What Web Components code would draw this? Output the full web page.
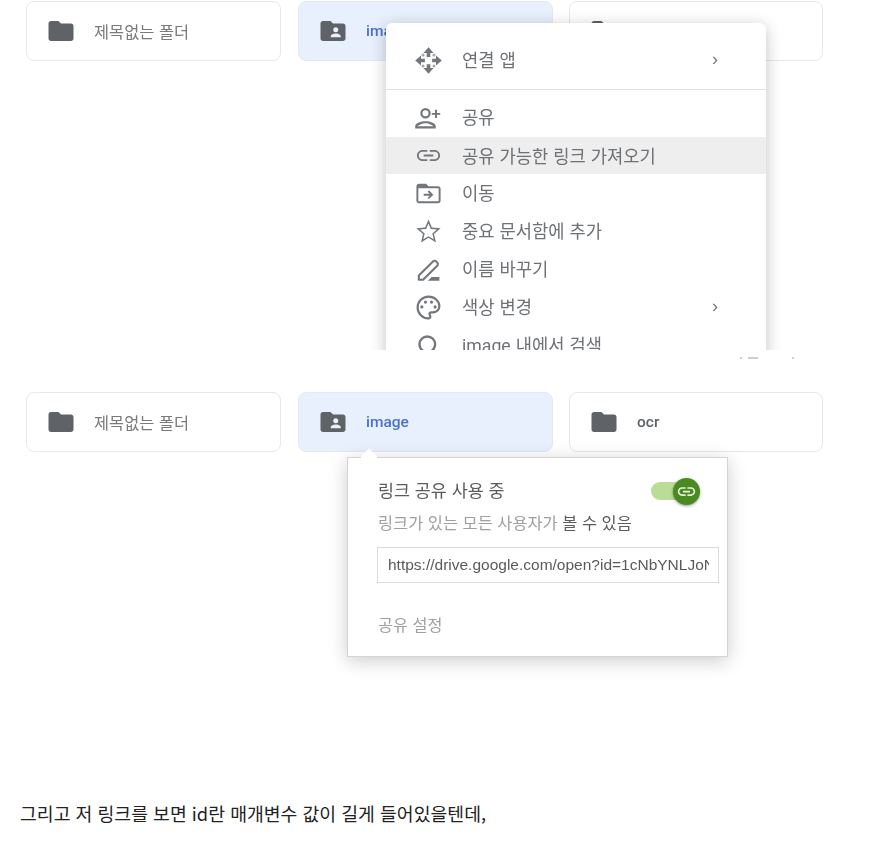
<!DOCTYPE html>
<html lang="ko">
<head>
<meta charset="utf-8">
<title>드라이브 링크 공유</title>
<style>
  html, body { margin: 0; background: #fff; }
  body { font-family: "Noto Sans CJK KR", "Noto Sans", sans-serif; }
</style>
</head>
<body>

<shot-frame style="height:350px">
  <folder-card name="제목없는 폴더"></folder-card>
  <folder-card name="image" kind="shared" selected></folder-card>
  <folder-card name=""></folder-card>
  <context-menu slot="over"></context-menu>
</shot-frame>

<scrap-marks></scrap-marks>

<shot-frame style="height:320px;margin-top:31px">
  <folder-card name="제목없는 폴더"></folder-card>
  <folder-card name="image" kind="shared" selected></folder-card>
  <folder-card name="ocr"></folder-card>
  <share-popover slot="over"></share-popover>
</shot-frame>

<blog-line>그리고 저 링크를 보면 id란 매개변수 값이 길게 들어있을텐데,</blog-line>

<script>
const ICONS = {
  folder: '<path d="M10 4H4c-1.1 0-2 .9-2 2v12c0 1.1.9 2 2 2h16c1.1 0 2-.9 2-2V8c0-1.1-.9-2-2-2h-8l-2-2z"/>',
  shared: '<path fill-rule="evenodd" d="M10 4H4c-1.1 0-2 .9-2 2v12c0 1.1.9 2 2 2h16c1.1 0 2-.9 2-2V8c0-1.1-.9-2-2-2h-8l-2-2zM14.2 9a2 2 0 1 1 0 4 2 2 0 0 1 0-4zm4 8h-8v-1c0-1.33 2.67-2 4-2s4 .67 4 2v1z"/>',
  apps: '<path d="M12 1l4.200 4.800h-2.700V9h-3V5.800H7.800zM12 23l-4.200-4.800h2.700V15h3v3.200h2.700zM1 12l4.800-4.200v2.700H9v3H5.800v2.700zM23 12l-4.800 4.200v-2.700H15v-3h3.200V7.800z"/><path opacity=".65" d="M7.500 6l1.500 1.500L7.500 9 6 7.500zM16.500 6L18 7.500 16.500 9 15 7.500zM7.500 15L9 16.500 7.500 18 6 16.500zM16.500 15l1.500 1.500-1.500 1.500-1.500-1.500z"/>',
  person: '<path d="M9.500 6a2.500 2.500 0 1 1 0 5 2.500 2.500 0 0 1 0-5m0-1.800a4.300 4.300 0 1 0 0 8.600 4.300 4.300 0 0 0 0-8.600zM9.500 15C6 15 1 16.500 1 19v2h17v-2c0-2.500-5-4-8.500-4zm-6.500 4.300c.5-.8 3.500-2.500 6.500-2.500s6 1.700 6.500 2.500z"/><path d="M19 8.200V5.500h-1.600v2.700h-2.700v1.600h2.700v2.700H19V9.800h2.700V8.200z"/>',
  link: '<path d="M3.900 12c0-1.710 1.390-3.100 3.100-3.100h4V7.400H7C4.500 7.400 2.400 9.500 2.400 12s2.100 4.600 4.600 4.600h4v-1.500H7c-1.710 0-3.100-1.390-3.100-3.100zM8 12.800h8v-1.600H8v1.600zm9-5.400h-4v1.500h4c1.710 0 3.100 1.390 3.100 3.100s-1.390 3.100-3.100 3.100h-4v1.500h4c2.500 0 4.600-2.100 4.600-4.600S19.500 7.400 17 7.400z"/>',
  move: '<path d="M20 6h-8l-2-2H4c-1.100 0-1.990.9-1.990 2L2 18c0 1.100.9 2 2 2h16c1.100 0 2-.9 2-2V8c0-1.100-.9-2-2-2zm.4 12.400H3.600V7.600h16.800v10.800z"/><path d="M12.400 9.400l-1.100 1.100 1.700 1.700H8v1.600h5l-1.700 1.700 1.100 1.100 3.600-3.600z"/>',
  star: '<path d="M22 9.240l-7.190-.62L12 2 9.190 8.630 2 9.240l5.460 4.730L5.820 21 12 17.270 18.180 21l-1.630-7.030L22 9.240zM12 15.900l-4.300 2.600 1.150-4.900-3.800-3.300 5-.43L12 5.300l1.950 4.570 5 .43-3.800 3.300 1.150 4.900z"/>',
  rename: '<path fill="none" stroke="currentColor" stroke-width="1.700" stroke-linejoin="round" d="M4 20.500v-3.500L15.700 5.300a1.800 1.800 0 0 1 2.600 0l.9.9a1.800 1.800 0 0 1 0 2.600L7.500 20.500z"/><path d="M11.500 21.300l3-3H21v3z"/>',
  palette: '<path fill="none" stroke="currentColor" stroke-width="1.800" d="M12 3a9 9 0 0 0 0 18c.9 0 1.500-.7 1.500-1.500 0-.9-.7-1.200-.7-2 0-.9.7-1.500 1.500-1.500H16c2.800 0 5-2.200 5-5 0-4.400-4-8-9-8z"/><circle cx="6.500" cy="11.500" r="1.300"/><circle cx="9.500" cy="7.500" r="1.300"/><circle cx="14.500" cy="7.500" r="1.300"/><circle cx="17.500" cy="11.500" r="1.300"/>',
  search: '<circle cx="11" cy="11" r="6.500" fill="none" stroke="currentColor" stroke-width="2"/><path d="M15.500 15.500l5 5" stroke="currentColor" stroke-width="2"/>',
  chain: '<path d="M3.900 12c0-1.710 1.390-3.100 3.100-3.100h4V7H7c-2.760 0-5 2.240-5 5s2.240 5 5 5h4v-1.900H7c-1.710 0-3.100-1.390-3.100-3.100zM8 13h8v-2H8v2zm9-6h-4v1.900h4c1.710 0 3.100 1.390 3.100 3.100s-1.390 3.100-3.100 3.100h-4V17h4c2.760 0 5-2.240 5-5s-2.240-5-5-5z"/>'
}

const icon = (name, size) => `<svg width="${size}" height="${size}" viewBox="0 0 24 24" fill="currentColor" aria-hidden="true">${ICONS[name]}</svg>`

/**
 * One captured part of the screenshot, cards in a row with an overlay on top.
 */
customElements.define('shot-frame', class extends HTMLElement {
  constructor () {
    super()
    this.attachShadow({ mode: 'open' }).innerHTML = `
      <style>
        :host { display: block; position: relative; overflow: hidden; filter: blur(.5px); }
        .row { display: flex; gap: 17px; padding: 1px 0 0 26px; }
      </style>
      <div class="row"><slot></slot></div>
      <slot name="over"></slot>`
  }
})

/**
 * A folder card of the Drive grid.
 */
customElements.define('folder-card', class extends HTMLElement {
  constructor () {
    super()
    const kind = this.getAttribute('kind') === 'shared' ? 'shared' : 'folder'
    const name = this.getAttribute('name')
    this.attachShadow({ mode: 'open' }).innerHTML = `
      <style>
        :host {
          display: flex; align-items: center; box-sizing: border-box;
          width: 255px; height: 60px; padding-left: 19px;
          border: 1px solid #e6e8ea; border-radius: 8px; background: #fff; color: #5f6368;
        }
        :host([selected]) { background: #e8f0fe; border-color: #e2e9f5; }
        :host(:last-of-type) { margin-left: -1px; width: 254px; }
        svg { color: #5f6368; flex: none; }
        span { margin-left: 18px; font-size: 16.400px; line-height: 20px; color: #7a7a7a; padding-bottom: 1px; }
        .latin { font: 500 15.500px/20px Roboto, sans-serif; color: #5f6368; padding-bottom: 0; }
        :host([selected]) .latin { color: #4a72cc; }
      </style>
      ${icon(kind, 30)}<span class="${/^[a-z]/.test(name) ? 'latin' : ''}">${name}</span>`
  }
})

/**
 * One row of the context menu.
 */
customElements.define('menu-item', class extends HTMLElement {
  constructor () {
    super()
    this.attachShadow({ mode: 'open' }).innerHTML = `
      <style>
        :host {
          display: flex; align-items: center; height: 38px; padding-left: 28px; padding-right: 48px;
          color: #73767a; font-size: 17.700px;
        }
        :host([hover]) { background: #eeeeee; height: 37px; margin-top: 1px; }
        svg { flex: none; }
        .label { margin-left: 19px; flex: 1; white-space: nowrap; color: #6e7175; padding-bottom: 2px; }
        .more { font: 18px "Liberation Sans", sans-serif; color: #777; padding-bottom: 2px; }
      </style>
      ${icon(this.getAttribute('icon'), 29)}
      <span class="label"><slot></slot></span>
      ${this.hasAttribute('more') ? '<span class="more">&#8250;</span>' : ''}`
  }
})

/**
 * The right click menu of the first shot.
 */
customElements.define('context-menu', class extends HTMLElement {
  constructor () {
    super()
    this.attachShadow({ mode: 'open' }).innerHTML = `
      <style>
        :host {
          position: absolute; left: 386px; top: 23px; width: 380px; height: 400px;
          background: #fff; border-radius: 6px 6px 0 0;
          box-shadow: 0 3px 16px rgba(0, 0, 0, .24);
        }
        .first { padding: 18px 0 10px; border-bottom: 1px solid #e2e2e2; margin-bottom: 8px; }
      </style>
      <div class="first"><menu-item icon="apps" more>연결 앱</menu-item></div>
      <menu-item icon="person">공유</menu-item>
      <menu-item icon="link" hover>공유 가능한 링크 가져오기</menu-item>
      <menu-item icon="move">이동</menu-item>
      <menu-item icon="star">중요 문서함에 추가</menu-item>
      <menu-item icon="rename">이름 바꾸기</menu-item>
      <menu-item icon="palette" more>색상 변경</menu-item>
      <menu-item icon="search"><span style="font-family:Roboto,sans-serif">image</span> 내에서 검색</menu-item>`
  }
})

/**
 * The link sharing bubble of the second shot.
 */
customElements.define('share-popover', class extends HTMLElement {
  constructor () {
    super()
    this.attachShadow({ mode: 'open' }).innerHTML = `
      <style>
        :host {
          position: absolute; left: 347px; top: 66px; width: 381px; height: 200px; box-sizing: border-box;
          padding: 17px 8px 0 30px;
          background: #fff; border: 1px solid #d4d4d4;
          box-shadow: 0 4px 18px rgba(0, 0, 0, .2);
        }
        .beak {
          position: absolute; left: 15px; top: -7px; width: 12px; height: 12px;
          background: #fff; transform: rotate(45deg);
        }
        .head { display: flex; align-items: center; justify-content: space-between; height: 28px; padding-right: 19px; }
        .title { font-size: 17.400px; color: #5c5c5c; }
        .note { margin-top: 7px; height: 24px; line-height: 24px; font-size: 16.400px; color: #a0a0a0; white-space: nowrap; }
        .note b { font-weight: 400; color: #5c5c5c; }
        .url {
          box-sizing: border-box; height: 36px; margin: 13px 0 0 -1px; padding: 0 9px 0 10px;
          border: 1px solid #dcdcdc; white-space: nowrap;
          font: 15.500px/34px "Liberation Sans", sans-serif; color: #5a5a5a;
        }
        .set { margin-top: 29px; font-size: 16.300px; line-height: 24px; color: #a0a0a0; }
        .toggle { position: relative; width: 49px; height: 20px; top: 2px; }
        .track { position: absolute; left: 0; top: 1px; width: 40px; height: 18px; border-radius: 9px; background: #b9dc97; }
        .knob {
          position: absolute; left: 22px; top: -3px; width: 27px; height: 27px; border-radius: 50%;
          display: flex; align-items: center; justify-content: center;
          background: #4a8a21; color: #e8f2df; box-shadow: 0 1px 3px rgba(0, 0, 0, .4);
        }
      </style>
      <span class="beak"></span>
      <div class="head">
        <span class="title">링크 공유 사용 중</span>
        <span class="toggle"><span class="track"></span><span class="knob">${icon('chain', 21)}</span></span>
      </div>
      <div class="note">링크가 있는 모든 사용자가 <b>볼 수 있음</b></div>
      <div class="url"><div style="overflow:hidden">https://drive.google.com/open?id=1cNbYNLJoN</div></div>
      <div class="set">공유 설정</div>`
  }
})

/**
 * The cut off bits of text just under the first shot.
 */
customElements.define('scrap-marks', class extends HTMLElement {
  constructor () {
    super()
    this.attachShadow({ mode: 'open' }).innerHTML = `
      <style>
        :host { display: flex; height: 10px; padding: 7px 0 0 740px; gap: 6px; box-sizing: border-box; }
        i { display: block; height: 2px; background: #cfcfcf; }
      </style>
      <i style="width:2px"></i><i style="width:10px"></i><i style="width:2px;margin-left:28px"></i>`
  }
})

/**
 * The line of running blog text.
 */
customElements.define('blog-line', class extends HTMLElement {
  constructor () {
    super()
    this.attachShadow({ mode: 'open' }).innerHTML = `
      <style>
        :host { display: block; margin-top: 87px; padding-left: 20px; font-size: 18.300px; line-height: 30px; color: #222; white-space: nowrap; }
      </style>
      <slot></slot>`
  }
})
</script>
</body>
</html>
